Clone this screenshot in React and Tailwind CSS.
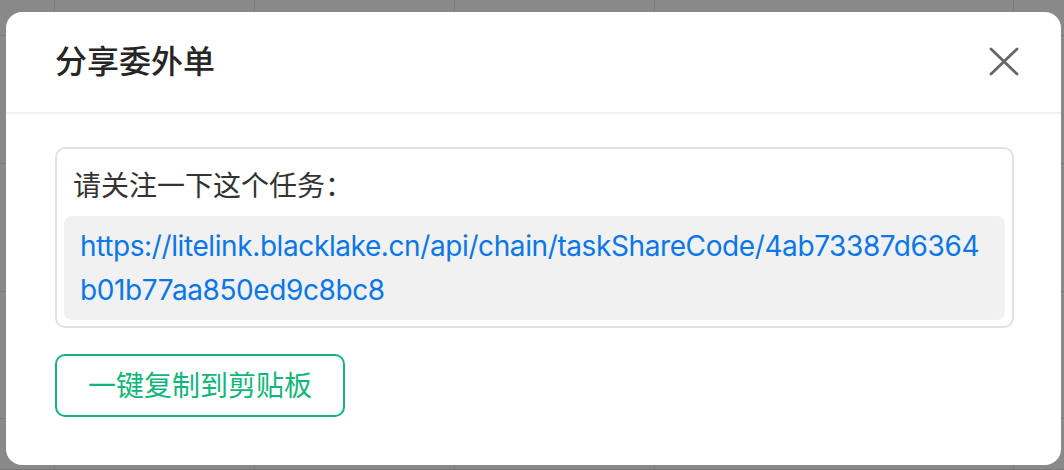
import React from "react";

const rowHeights = ["h-[36px]", "h-[128px]", "h-[128px]", "h-[127px]", "h-[51px]"];

function BgRow({ h }) {
  return (
    <div className={`grid grid-cols-[55px_200px_200px_200px_359px_1fr] border-b border-[#7a7a7a] ${h}`}>
      <div className="border-r border-[#7a7a7a]" />
      <div className="border-r border-[#7a7a7a]" />
      <div className="border-r border-[#7a7a7a]" />
      <div className="border-r border-[#7a7a7a]" />
      <div className="border-r border-[#7a7a7a]" />
      <div />
    </div>
  );
}

export default function App() {
  return (
    <div
      className="relative w-[1064px] h-[470px] overflow-hidden bg-[#898989]"
      style={{ fontFamily: 'Inter, "Noto Sans CJK SC", sans-serif' }}
    >
      <div className="flex flex-col">
        {rowHeights.map((h, i) => (
          <BgRow key={i} h={h} />
        ))}
      </div>

      <div className="absolute left-[6px] top-[12px] w-[1055px] h-[453px] bg-white rounded-[16px] flex flex-col">
        <div className="h-[102px] shrink-0 flex items-center justify-between pl-[49px] pr-[42px] border-b-2 border-[#f0f0f0]">
          <div className="text-[32px] leading-[44px] font-medium text-[#262626]">分享委外单</div>
          <svg width="30" height="30" viewBox="0 0 30 30">
            <path d="M2 2 L28 27 M28 2 L2 27" stroke="#666666" strokeWidth="2.8" strokeLinecap="round" fill="none" />
          </svg>
        </div>

        <div className="pl-[49px] pr-[46px] pt-[33px] flex flex-col items-start">
          <div className="w-[959px] border-2 border-[#e2e2e2] rounded-[10px] px-[7px] pt-[15px] pb-[6px]">
            <div className="px-[9px] text-[28px] leading-[44px] text-[#333333]">请关注一下这个任务：</div>
            <div className="mt-[8px] bg-[#f1f1f1] rounded-[8px] px-[16px] py-[8px] text-[28px] leading-[44px] tracking-[-0.4px] text-[#0a77e6] break-all">
              https://litelink.blacklake.cn/api/chain/taskShareCode/4ab73387d6364b01b77aa850ed9c8bc8
            </div>
          </div>

          <button className="mt-[26px] w-[290px] h-[63px] border-2 border-[#10b67c] rounded-[10px] text-[28px] leading-[44px] text-[#10b67c] bg-white flex items-center justify-center">
            一键复制到剪贴板
          </button>
        </div>
      </div>
    </div>
  );
}
